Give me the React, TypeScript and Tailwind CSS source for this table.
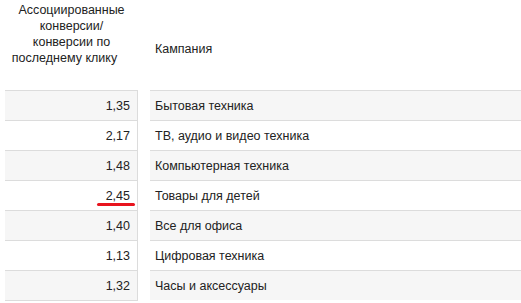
import React from 'react';

const rows = [
  { value: '1,35', name: 'Бытовая техника' },
  { value: '2,17', name: 'ТВ, аудио и видео техника' },
  { value: '1,48', name: 'Компьютерная техника' },
  { value: '2,45', name: 'Товары для детей', mark: true },
  { value: '1,40', name: 'Все для офиса' },
  { value: '1,13', name: 'Цифровая техника' },
  { value: '1,32', name: 'Часы и аксессуары' },
];

export default function App() {
  return (
    <div className="w-[521px] h-[303px] bg-white text-[12.5px] leading-[16px] text-[#222] font-['Liberation_Sans',Arial,sans-serif] flex pl-[5px]">
      {/* Conversions column */}
      <div className="w-[133px] flex flex-col">
        <div className="h-[90px] pt-[2px] text-center">
          <div>Ассоциированные</div>
          <div>конверсии/</div>
          <div>конверсии по</div>
          <div className="pr-[14px]">последнему клику</div>
        </div>
        <div className="border-t border-b border-r border-[#dcdcdc]">
          {rows.map((r, i) => (
            <div
              key={i}
              className={`relative flex items-center justify-end pr-[7px] ${i > 0 ? 'h-[30px] border-t border-[#dcdcdc]' : 'h-[29px]'} ${i % 2 === 0 ? 'bg-[#f6f6f6]' : 'bg-white'}`}
            >
              {r.value}
              {r.mark && (
                <span className="absolute right-[2px] w-[38px] top-[22px] h-[3px] rounded-full bg-[#e8141e]" />
              )}
            </div>
          ))}
        </div>
      </div>

      {/* Campaign column */}
      <div className="flex-1 flex flex-col ml-[12px]">
        <div className="h-[90px] pt-[41px] pl-[5px]">Кампания</div>
        <div className="border-t border-[#dcdcdc]">
          {rows.map((r, i) => (
            <div
              key={i}
              className={`flex items-center pl-[5px] ${i > 0 ? 'h-[30px] border-t border-[#dcdcdc]' : 'h-[29px]'} ${i % 2 === 0 ? 'bg-[#f6f6f6]' : 'bg-white'}`}
            >
              {r.name}
            </div>
          ))}
        </div>
      </div>
    </div>
  );
}
